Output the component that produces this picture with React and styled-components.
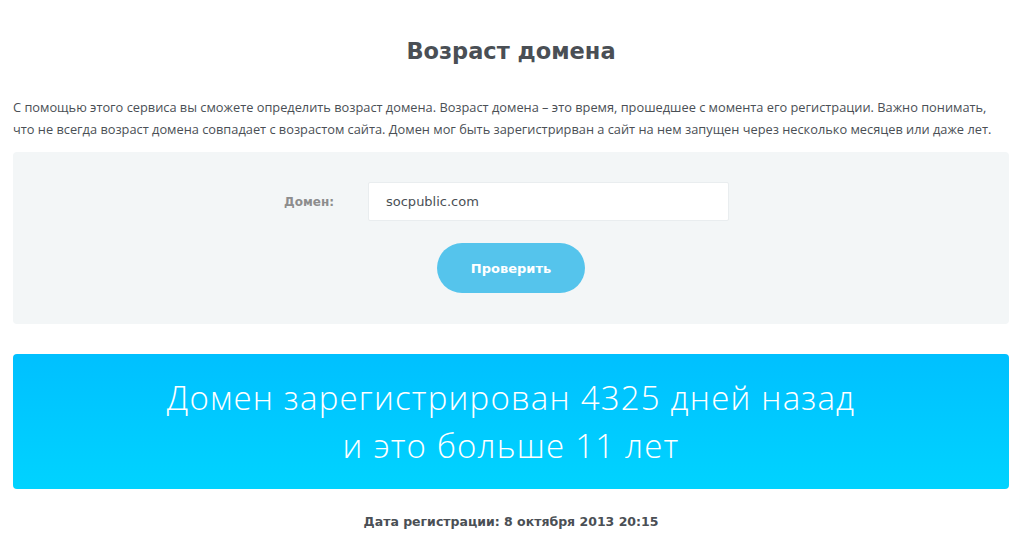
import React from 'react';
import styled, { createGlobalStyle } from 'styled-components';

const GlobalStyle = createGlobalStyle`
  html, body {
    margin: 0;
    padding: 0;
    background: #ffffff;
  }
  body {
    font-family: "Open Sans", "Noto Sans", sans-serif;
    color: #4a4f55;
  }
`;

const Page = styled.div`
  padding: 0 11px 0 13px;
`;

const Title = styled.h1`
  margin: 0;
  padding-top: 37px;
  height: 63px;
  box-sizing: border-box;
  text-align: center;
  font-family: "DejaVu Sans", sans-serif;
  font-size: 22.5px;
  font-weight: 700;
  color: #4a4f55;
  line-height: 28px;
`;

const Intro = styled.p`
  margin: 33px 0 12px;
  max-width: 980px;
  font-size: 12.8px;
  line-height: 22px;
  color: #4a4f55;
`;

const FormPanel = styled.div`
  background: #f3f6f7;
  border-radius: 4px;
  padding: 30px 0 31px;
  display: flex;
  flex-direction: column;
  align-items: center;
  gap: 22px;
`;

const FieldRow = styled.div`
  display: flex;
  align-items: center;
  margin-right: 9px;
`;

const Label = styled.label`
  width: 84px;
  font-family: "DejaVu Sans", sans-serif;
  font-size: 12px;
  font-weight: 700;
  color: #8d8d8d;
`;

const Input = styled.input`
  width: 361px;
  height: 39px;
  box-sizing: border-box;
  border: 1px solid #e9edef;
  border-radius: 2px;
  background: #ffffff;
  padding: 0 17px;
  font-family: "DejaVu Sans", sans-serif;
  font-size: 13px;
  color: #4a4f55;
  outline: none;
`;

const Button = styled.button`
  width: 148px;
  height: 50px;
  border: none;
  border-radius: 25px;
  background: #55c4ec;
  color: #ffffff;
  font-family: "DejaVu Sans", sans-serif;
  font-size: 13px;
  font-weight: 700;
  cursor: pointer;
`;

const Result = styled.div`
  margin-top: 30px;
  height: 135px;
  border-radius: 4px;
  background: linear-gradient(180deg, #00c0ff 0%, #00d3ff 100%);
  display: flex;
  align-items: center;
  justify-content: center;
  text-align: center;
  color: #ffffff;
  font-family: "Open Sans", sans-serif;
  font-weight: 300;
  font-size: 33px;
  letter-spacing: 1.2px;
  line-height: 48px;
`;

const RegDate = styled.div`
  margin-top: 25px;
  text-align: center;
  font-family: "DejaVu Sans", sans-serif;
  font-size: 12.5px;
  font-weight: 700;
  color: #4a4f55;
`;

export default function App() {
  return (
    <>
      <GlobalStyle />
      <Page>
        <Title>Возраст домена</Title>
        <Intro>
          С помощью этого сервиса вы сможете определить возраст домена. Возраст домена – это время, прошедшее с момента его регистрации. Важно понимать, что не всегда возраст домена совпадает с возрастом сайта. Домен мог быть зарегистрирван а сайт на нем запущен через несколько месяцев или даже лет.
        </Intro>
        <FormPanel>
          <FieldRow>
            <Label htmlFor="domain">Домен:</Label>
            <Input id="domain" defaultValue="socpublic.com" />
          </FieldRow>
          <Button>Проверить</Button>
        </FormPanel>
        <Result>
          <div>
            Домен зарегистрирован 4325 дней назад
            <br />
            и это больше 11 лет
          </div>
        </Result>
        <RegDate>Дата регистрации: 8 октября 2013 20:15</RegDate>
      </Page>
    </>
  );
}
